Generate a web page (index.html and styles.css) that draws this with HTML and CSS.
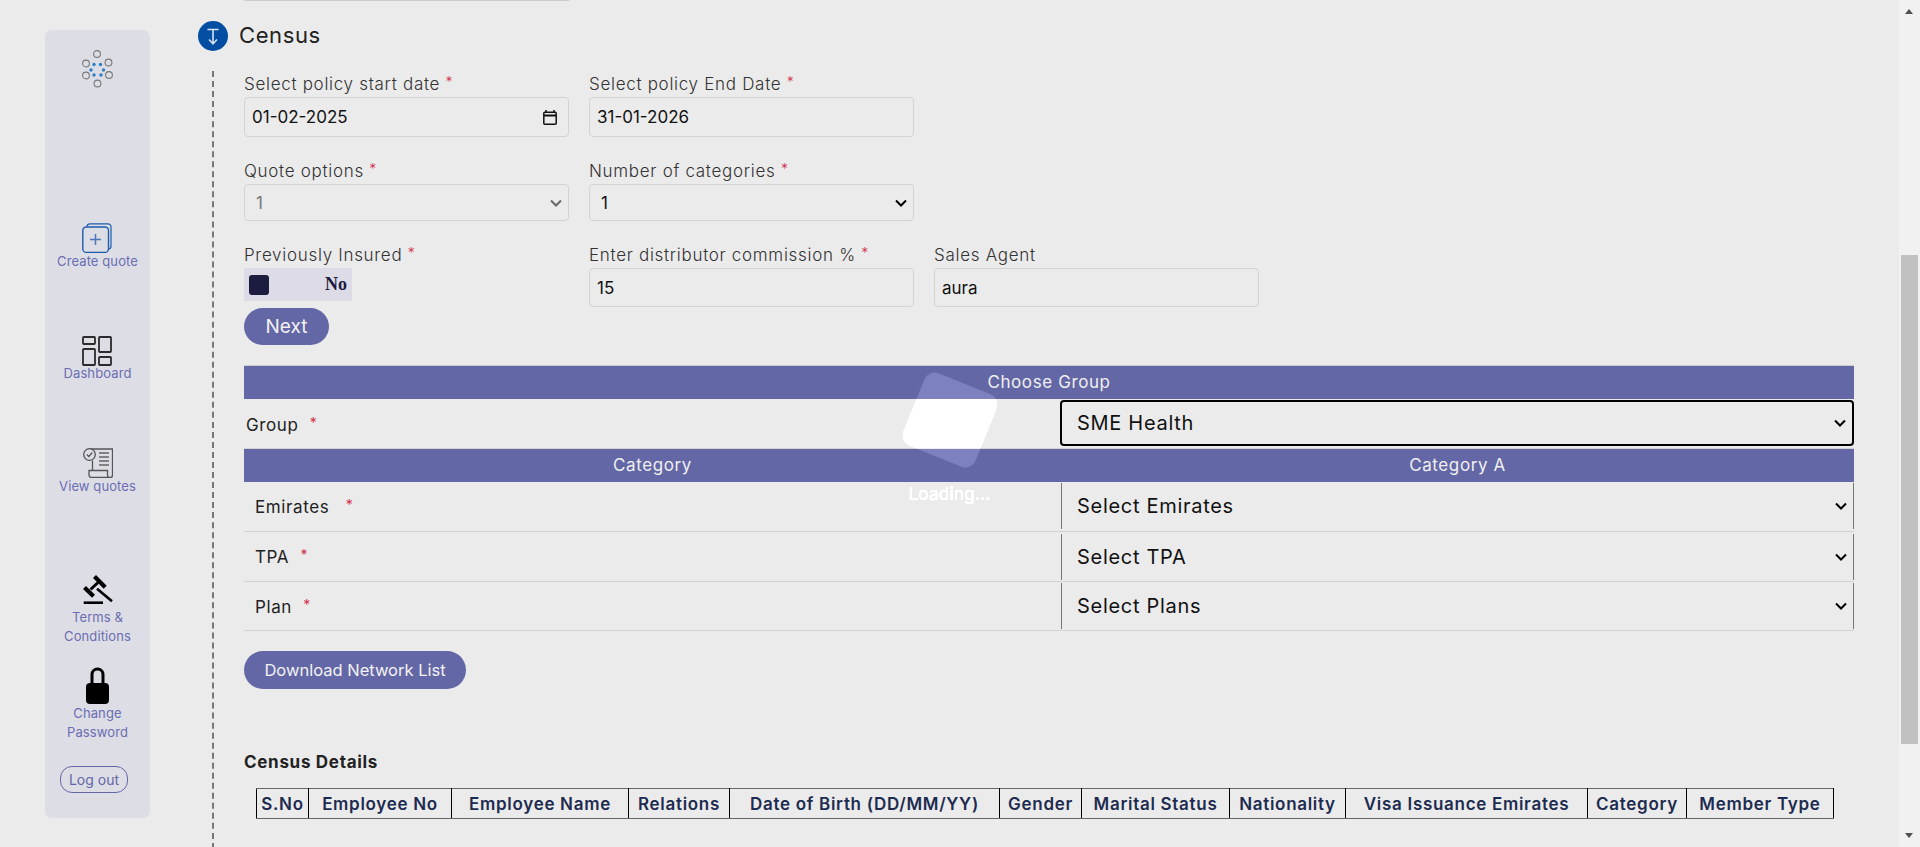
FILE: index.html
```html
<!DOCTYPE html>
<html lang="en">
<head>
  <meta charset="UTF-8">
  <meta name="viewport" content="width=device-width, initial-scale=1.0">
  <title>Census</title>
  <link rel="stylesheet" href="styles.css">
</head>
<body>
  <div class="page">
    <aside class="sidebar">
      <svg class="logo" width="34" height="38" viewBox="0 0 34 38">
        <g fill="none" stroke="#777" stroke-width="1.1">
          <circle cx="16" cy="4" r="3.4"/>
          <circle cx="5" cy="13.5" r="3.4"/>
          <circle cx="27.5" cy="12.5" r="3.4"/>
          <circle cx="5" cy="25.5" r="3.4"/>
          <circle cx="28" cy="25" r="3.4"/>
          <circle cx="16.5" cy="33.5" r="3.4"/>
        </g>
        <g fill="#2b80c5">
          <circle cx="13" cy="14.5" r="1.7"/>
          <circle cx="19.5" cy="14.5" r="1.7"/>
          <circle cx="10" cy="20" r="1.7"/>
          <circle cx="22.5" cy="20" r="1.7"/>
          <circle cx="13" cy="25" r="1.7"/>
          <circle cx="20" cy="25" r="1.7"/>
        </g>
      </svg>

      <a href="#create" class="nav-item nav-create">
        <svg width="30" height="30" viewBox="0 0 30 30" fill="none">
          <path d="M5 3.5 A3 3 0 0 1 8 .8 H26 A3 3 0 0 1 29 3.8 V23 A3 3 0 0 1 26.5 26" stroke="#1c5cab" stroke-width="1.2"/>
          <rect x=".8" y="4" width="25.7" height="25.4" rx="3.5" stroke="#1c5cab" stroke-width="1.4" fill="#dddde6"/>
          <path d="M13.5 11 V22 M8 16.5 H19" stroke="#4b78b9" stroke-width="1.5"/>
        </svg>
        <span>Create quote</span>
      </a>

      <a href="#dashboard" class="nav-item">
        <svg width="30" height="30" viewBox="0 0 30 30" fill="none" stroke="#2b2b2b" stroke-width="1.8">
          <rect x="1" y="1" width="12" height="7" rx=".8"/>
          <rect x="17" y="1" width="12" height="15" rx=".8"/>
          <rect x="1" y="13" width="12" height="16" rx=".8"/>
          <rect x="17" y="21" width="12" height="8" rx=".8"/>
        </svg>
        <span>Dashboard</span>
      </a>

      <a href="#quotes" class="nav-item">
        <svg width="30" height="30" viewBox="0 0 30 30" fill="none" stroke="#555" stroke-width="1.3">
          <path d="M7 1 H29.5 V27 A2.5 2.5 0 0 1 24.5 27 V22.5 H6 V27 A2.5 2.5 0 0 0 8.5 29.5 H27"/>
          <path d="M9.5 22 V12.5"/>
          <circle cx="6.5" cy="6.5" r="5.8" fill="#dddde6"/>
          <path d="M3.8 6.5 L5.8 8.5 L9.3 4.5" stroke-width="1.2"/>
          <path d="M16 5 H26 M16 9 H26 M16 13 H26 M16 17 H26" stroke="#666" stroke-width="1.6"/>
        </svg>
        <span>View quotes</span>
      </a>

      <a href="#terms" class="nav-item nav-terms">
        <svg width="30" height="30" viewBox="0 0 30 30" fill="none" stroke="#000">
          <path d="M1.5 13.5 L10.5 22.3" stroke-width="4.2"/>
          <path d="M11.5 2.5 L22.2 13.3" stroke-width="4.2"/>
          <path d="M7.5 15.5 L15 8.5" stroke-width="3"/>
          <path d="M14 14.7 L29 27.3" stroke-width="2.6"/>
          <path d="M.7 28.7 H20" stroke-width="2.6"/>
        </svg>
        <span>Terms &amp; Conditions</span>
      </a>

      <a href="#password" class="nav-item nav-lock">
        <svg width="23" height="37" viewBox="0 0 23 37">
          <path d="M6 17 V7.5 A5.5 5.5 0 0 1 17 7.5 V17" fill="none" stroke="#000" stroke-width="3"/>
          <rect y="16" width="23" height="21" rx="4"/>
        </svg>
        <span>Change Password</span>
      </a>

      <button class="logout">Log out</button>
    </aside>

    <main class="main">
      <div class="prev-field"></div>

      <div class="section-head">
        <svg width="30" height="30" viewBox="0 0 30 30">
          <circle cx="15" cy="15" r="15" fill="#034ea2"/>
          <path d="M9.5 8.5 H20.5 M15 9 V22.5 M11 18.5 L15 22.8 L19 18.5" fill="none" stroke="#d5e3f2" stroke-width="1.6"/>
        </svg>
        <h2>Census</h2>
      </div>

      <section class="section-body">
        <div class="field-row">
          <div class="field">
            <label>Select policy start date <span class="req">*</span></label>
            <div class="input date-input">
              <span>01-02-2025</span>
              <svg width="14" height="15" viewBox="0 0 14 15" fill="none" stroke="#111">
                <path d="M3 0 V3 M11 0 V3" stroke-width="1.5"/>
                <rect x=".8" y="2.3" width="12.4" height="11.9" rx="1" stroke-width="1.5"/>
                <path d="M1 5.5 H13" stroke-width="2"/>
              </svg>
            </div>
          </div>
          <div class="field">
            <label>Select policy End Date <span class="req">*</span></label>
            <input class="input" type="text" value="31-01-2026">
          </div>
        </div>

        <div class="field-row">
          <div class="field">
            <label>Quote options <span class="req">*</span></label>
            <select class="input select-short" disabled><option>1</option></select>
          </div>
          <div class="field">
            <label>Number of categories <span class="req">*</span></label>
            <select class="input select-short"><option>1</option></select>
          </div>
        </div>

        <div class="field-row field-row-last">
          <div class="field">
            <label>Previously Insured <span class="req">*</span></label>
            <div class="toggle"><span class="knob"></span><b>No</b></div>
          </div>
          <div class="field">
            <label>Enter distributor commission % <span class="req">*</span></label>
            <input class="input input-mid" type="text" value="15">
          </div>
          <div class="field">
            <label>Sales Agent</label>
            <input class="input input-mid" type="text" value="aura">
          </div>
        </div>

        <button class="btn btn-next">Next</button>

        <table class="group-table">
          <colgroup><col class="col-left"><col></colgroup>
          <tr class="band"><th colspan="2">Choose Group</th></tr>
          <tr class="row-group">
            <td class="group-label">Group <span class="req req-wide">*</span></td>
            <td><select class="group-select"><option>SME Health</option></select></td>
          </tr>
          <tr class="band"><th>Category</th><th>Category A</th></tr>
          <tr>
            <td class="cat-label">Emirates <span class="req req-wider">*</span></td>
            <td><select class="cat-select"><option>Select Emirates</option></select></td>
          </tr>
          <tr>
            <td class="cat-label">TPA <span class="req req-wide">*</span></td>
            <td><select class="cat-select"><option>Select TPA</option></select></td>
          </tr>
          <tr class="row-last">
            <td class="cat-label">Plan <span class="req req-wide">*</span></td>
            <td><select class="cat-select"><option>Select Plans</option></select></td>
          </tr>
        </table>

        <button class="btn btn-download">Download Network List</button>

        <h4 class="census-title">Census Details</h4>

        <table class="census-table">
          <tr>
            <th style="width:52px">S.No</th>
            <th style="width:143px">Employee No</th>
            <th style="width:177px">Employee Name</th>
            <th style="width:101px">Relations</th>
            <th style="width:270px">Date of Birth (DD/MM/YY)</th>
            <th style="width:82px">Gender</th>
            <th style="width:148px">Marital Status</th>
            <th style="width:116px">Nationality</th>
            <th style="width:242px">Visa Issuance Emirates</th>
            <th style="width:99px">Category</th>
            <th style="width:147px">Member Type</th>
          </tr>
        </table>
      </section>
    </main>

    <div class="scroll-rail">
      <span class="arrow-up"></span>
      <span class="scroll-thumb"></span>
      <span class="arrow-down"></span>
    </div>
  </div>

  <div class="loading">
    <div class="spinner"></div>
    <div class="loading-text">Loading...</div>
  </div>
</body>
</html>
```

FILE: styles.css
```css
* {
  box-sizing: border-box;
}

html, body {
  height: 100%;
}

body {
  margin: 0;
  background-color: #ebebeb;
  font-family: Inter, "Open Sans", sans-serif;
  font-size: 16px;
  color: #222;
  overflow: hidden;
}

.page {
  display: flex;
  height: 847px;
  overflow: hidden;
}

/* left menu */
.sidebar {
  flex: none;
  width: 105px;
  height: 788px;
  margin: 30px 0 0 45px;
  padding-top: 20px;
  background-color: #dddde6;
  border-radius: 7px;
  display: flex;
  flex-direction: column;
  align-items: center;
}

.logo {
  display: block;
  flex: none;
}

.nav-item {
  display: flex;
  flex-direction: column;
  align-items: center;
  margin-top: 65px;
  text-decoration: none;
  font-size: 13px;
  letter-spacing: .1px;
  line-height: 19px;
  color: #6a6db1;
  text-align: center;
}

.nav-item svg {
  display: block;
  margin-bottom: -1.5px;
}

.nav-create {
  margin-top: 135px;
}

.nav-terms {
  margin-top: 78px;
}

.nav-terms svg {
  margin-bottom: 4px;
}

.nav-terms span,
.nav-lock span {
  width: 86px;
}

.nav-lock {
  margin-top: 21px;
}

.nav-lock svg {
  margin-bottom: 0;
}

.logout {
  margin: 24px 0 0 -7px;
  width: 68px;
  height: 27px;
  padding: 0;
  background: none;
  border: 1px solid #6467a6;
  border-radius: 12px;
  font-family: Inter, sans-serif;
  font-size: 14px;
  color: #6467a6;
}

/* main column */
.main {
  flex: 1;
  min-width: 0;
  padding: 0 45px 0 48px;
}

.prev-field {
  width: 325px;
  height: 1px;
  margin-left: 46px;
  background-color: #ccc;
}

.section-head {
  display: flex;
  align-items: center;
  gap: 11px;
  margin-top: 20px;
  height: 30px;
}

.section-head h2 {
  margin: 0 0 2px;
  font-size: 22px;
  font-weight: 400;
  letter-spacing: .6px;
  color: #222;
}

.section-body {
  margin: 20px 0 0 14px;
  padding: 2px 0 60px 30px;
  border-left: 2px dashed #777;
}

.field-row {
  display: grid;
  grid-template-columns: repeat(3, 325px);
  column-gap: 20px;
  margin-bottom: 23px;
}

.field-row-last {
  margin-bottom: 1px;
}

.field label {
  display: block;
  height: 24px;
  line-height: 22px;
  font-size: 17px;
  font-weight: 300;
  letter-spacing: .7px;
  color: #333;
  white-space: nowrap;
}

.req {
  color: #d3304a;
  font-size: 14px;
  position: relative;
  top: -3px;
}

.req-wide {
  margin-left: 6px;
}

.req-wider {
  margin-left: 11px;
}

.input {
  display: block;
  width: 325px;
  height: 40px;
  padding: 0 7px;
  background-color: #ebebeb;
  border: 1px solid #d3d3d3;
  border-radius: 4px;
  font-family: Inter, sans-serif;
  font-size: 17px;
  color: #111;
}

.date-input {
  display: flex;
  align-items: center;
  justify-content: space-between;
  padding-right: 11px;
}

select {
  appearance: none;
  background-image: url("data:image/svg+xml,%3Csvg xmlns='http://www.w3.org/2000/svg' width='12' height='8' viewBox='0 0 12 8'%3E%3Cpath d='M1 1.5 L6 6.5 L11 1.5' fill='none' stroke='%23000' stroke-width='2'/%3E%3C/svg%3E");
  background-repeat: no-repeat;
  background-position: right 6px center;
  background-size: 12px 8px;
}

.select-short {
  height: 37px;
  padding-left: 11px;
  background-color: #ebebeb;
}

.select-short:disabled {
  color: #777;
  opacity: 1;
  background-image: url("data:image/svg+xml,%3Csvg xmlns='http://www.w3.org/2000/svg' width='12' height='8' viewBox='0 0 12 8'%3E%3Cpath d='M1 1.5 L6 6.5 L11 1.5' fill='none' stroke='%23666' stroke-width='2'/%3E%3C/svg%3E");
}

.input-mid {
  height: 39px;
}

.toggle {
  display: flex;
  align-items: center;
  justify-content: space-between;
  width: 108px;
  height: 33px;
  padding: 0 5px;
  background-color: #dddce6;
}

.knob {
  width: 20px;
  height: 20px;
  background-color: #1c1c40;
  border-radius: 3px;
}

.toggle b {
  font-family: "Liberation Serif", serif;
  font-size: 18px;
  color: #1c1c40;
}

.btn {
  display: block;
  padding: 0;
  background-color: #6467a6;
  border: none;
  border-radius: 19px;
  font-family: Inter, sans-serif;
  color: #f2f2f2;
}

.btn-next {
  width: 85px;
  height: 37px;
  font-size: 19px;
}

.btn-download {
  width: 222px;
  height: 38px;
  margin-top: 20px;
  font-size: 16.5px;
}

/* group + category table */
.group-table {
  width: 1610px;
  margin-top: 20px;
  border-collapse: collapse;
  table-layout: fixed;
}

.col-left {
  width: 817px;
}

.group-table td {
  height: 50px;
  padding: 0;
  border-bottom: 1px solid #d2d2d2;
  vertical-align: middle;
  font-size: 17px;
  letter-spacing: .6px;
}

.group-table .row-last td {
  height: 49px;
}

.band th {
  height: 33px;
  padding: 0;
  background-color: #6467a6;
  border-top: 1px solid #ccc;
  font-size: 17px;
  font-weight: 400;
  letter-spacing: .6px;
  color: #f0f0f0;
}

.group-label {
  padding: 3px 0 0 2px !important;
}

.cat-label {
  padding: 1px 0 0 11px !important;
}

.group-select {
  display: block;
  width: 794px;
  height: 46px;
  margin-left: -1px;
  padding: 0 15px;
  background-color: transparent;
  border: 2px solid #000;
  border-radius: 4px;
  font-family: Inter, sans-serif;
  font-size: 20px;
  letter-spacing: .7px;
  color: #111;
}

.cat-select {
  display: block;
  width: 793px;
  height: 46px;
  padding: 0 15px;
  background-color: transparent;
  border: none;
  border-left: 1px solid #777;
  border-right: 1px solid #777;
  border-radius: 0;
  font-family: Inter, sans-serif;
  font-size: 20px;
  letter-spacing: .7px;
  color: #111;
}

.census-title {
  margin: 61px 0 14px;
  font-size: 17px;
  line-height: 24px;
  font-weight: 700;
  letter-spacing: .7px;
  color: #222;
}

.census-table {
  margin-left: 12px;
  border-collapse: collapse;
  table-layout: fixed;
  width: 1577px;
}

.census-table th {
  height: 30px;
  padding: 0;
  border: 1px solid #000;
  border-top-color: #666;
  border-bottom-color: #666;
  font-size: 17px;
  font-weight: 600;
  letter-spacing: .7px;
  color: #1d2b50;
  white-space: nowrap;
}

/* drawn scrollbar */
.scroll-rail {
  flex: none;
  position: relative;
  width: 21px;
  background-color: #f1f1f1;
}

.scroll-thumb {
  position: absolute;
  top: 255px;
  left: 2px;
  width: 17px;
  height: 489px;
  background-color: #c1c1c1;
}

.arrow-up,
.arrow-down {
  position: absolute;
  left: 6px;
  width: 0;
  height: 0;
  border-left: 4.5px solid transparent;
  border-right: 4.5px solid transparent;
}

.arrow-up {
  top: 9px;
  border-bottom: 5px solid #505050;
}

.arrow-down {
  top: 833px;
  border-top: 5px solid #505050;
}

/* loading overlay */
.loading {
  position: fixed;
  top: 0;
  left: 0;
  right: 21px;
  bottom: 0;
  padding-top: 38px;
  display: flex;
  flex-direction: column;
  align-items: center;
  justify-content: center;
  mix-blend-mode: plus-lighter;
  pointer-events: none;
}

.spinner {
  width: 78px;
  height: 78px;
  background-color: #1a1a1a;
  border-radius: 11px;
  transform: rotate(22deg);
}

.loading-text {
  margin-top: 25px;
  font-size: 17px;
  line-height: 20px;
  letter-spacing: .3px;
  color: #fff;
}
```
